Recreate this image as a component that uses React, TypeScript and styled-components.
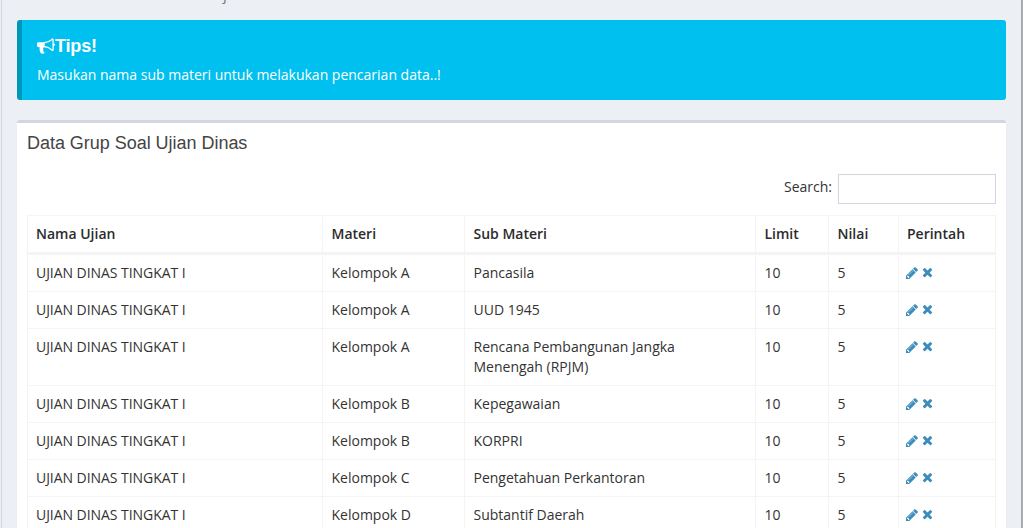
import React from "react";
import styled, { createGlobalStyle } from "styled-components";

const GlobalStyle = createGlobalStyle`
  *, *::before, *::after { box-sizing: border-box; }
  body {
    margin: 0;
    overflow: hidden;
    font: 14px/20px "Open Sans", "Liberation Sans", sans-serif;
    color: #333;
    background: #ecf0f5;
  }
`;

const Page = styled.main`
  height: 528px;
  overflow: hidden;
  margin-left: 1px;
  padding: 0 15px;
  background: #ecf0f5;
  border-left: 1px solid #d2d6de;
  border-right: 2px solid #a9abae;
`;

const PageHeading = styled.header`
  display: flex;
  align-items: flex-end;
  height: 20px;
  padding: 0 0 16px 206px;
  font: 15px/20px "Open Sans", sans-serif;
  color: #777;
`;

const Callout = styled.section`
  height: 80px;
  margin: 0 0 20px;
  padding: 16px 30px 14px 15px;
  border-left: 5px solid #0097bc;
  border-radius: 3px;
  background: #00c0ef;
  color: #fff;
`;

const CalloutTitle = styled.h4`
  display: flex;
  align-items: center;
  height: 20px;
  margin: 0 0 9px;
  font: bold 18px/20px "Liberation Sans", Arial, sans-serif;
  letter-spacing: -0.15px;
`;

const CalloutText = styled.p`
  margin: 0;
`;

const Box = styled.section`
  height: 520px;
  border-top: 3px solid #d2d6de;
  border-radius: 3px;
  background: #fff;
  box-shadow: 0 1px 1px rgba(0, 0, 0, 0.1);
`;

const BoxTitle = styled.h3`
  margin: 0;
  padding: 10px 10px 11px;
  font: 18px/20px "Liberation Sans", Arial, sans-serif;
  letter-spacing: -0.03px;
  color: #444;
`;

const BoxBody = styled.div`
  padding: 10px;
`;

const Filter = styled.label`
  display: flex;
  justify-content: flex-end;
  gap: 6px;
  line-height: 26px;
  margin-bottom: 11px;
`;

const SearchInput = styled.input`
  width: 158px;
  height: 30px;
  padding: 5px 10px;
  border: 1px solid #d2d6de;
  border-radius: 0;
  background: #fff;
`;

const Table = styled.table`
  width: 969px;
  table-layout: fixed;
  border-collapse: separate;
  border-spacing: 0;
  border-right: 1px solid #f4f4f4;
`;

const HeadCell = styled.th`
  height: 40px;
  padding: 8px 8px 8px 8.5px;
  border: solid #f4f4f4;
  border-width: 1px 0 3px 1px;
  text-align: left;
  font-weight: 600;
  color: #2b2b2b;

  &:first-child,
  &:last-child {
    padding-left: 8px;
  }
`;

const Cell = styled.td<{ $wide?: boolean }>`
  padding: 8px ${(p) => (p.$wide ? 30 : 8)}px 8px 8.5px;
  border: solid #f4f4f4;
  border-width: 0 0 1px 1px;
  vertical-align: top;

  &:first-child {
    padding-left: 8px;
    letter-spacing: -0.05px;
  }

  &:last-child {
    padding-left: 7px;
  }
`;

const Actions = styled.div`
  display: flex;
  align-items: center;
  gap: 4px;
  height: 20px;
  color: #3c8dbc;
`;

const Glyph = styled.svg`
  display: block;
  flex: none;
  fill: currentColor;
`;

const Bullhorn = () => (
  <Glyph width="18" height="18" viewBox="0 0 1792 1792" aria-hidden="true">
    <path d="M1664 640q53 0 90.500 37.500t37.500 90.500-37.500 90.500-90.500 37.500v384q0 52-38 90t-90 38q-417-347-812-380-58 19-91 66t-31 100.500 40 92.500q-20 33-23 65.500t6 58 33.500 55 48 50 61.500 50.500q-29 58-111.500 83t-168.500 11.500-132-55.500q-7-23-29.500-87.500t-32-94.500-23-89-15-101 3.500-98.500 22-110.500h-122q-66 0-113-47t-47-113v-192q0-66 47-113t113-47h480q435 0 896-384 52 0 90 38t38 90v384zM1536 1244v-954q-394 302-768 343v270q377 42 768 341z" />
  </Glyph>
);

const Pencil = () => (
  <Glyph width="12" height="14" viewBox="0 -128 1536 1792" aria-hidden="true">
    <path d="M363 1408l91-91-235-235-91 91v107h128v128h107zM886 480q0-22-22-22-10 0-17 7l-542 542q-7 7-7 17 0 22 22 22 10 0 17-7l542-542q7-7 7-17zM832 288l416 416-832 832h-416v-416zM1515 384q0 53-37 90l-166 166-416-416 166-165q36-38 90-38 53 0 91 38l235 234q37 39 37 91z" />
  </Glyph>
);

const Times = () => (
  <Glyph width="11" height="14" viewBox="0 0 1408 1792" aria-hidden="true">
    <path d="M1298 1214q0 40-28 68l-136 136q-28 28-68 28t-68-28l-294-294-294 294q-28 28-68 28t-68-28l-136-136q-28-28-28-68t28-68l294-294-294-294q-28-28-28-68t28-68l136-136q28-28 68-28t68 28l294 294 294-294q28-28 68-28t68 28l136 136q28 28 28 68t-28 68l-294 294 294 294q28 28 28 68z" />
  </Glyph>
);

const columns = [
  { label: "Nama Ujian", width: 295 },
  { label: "Materi", width: 142 },
  { label: "Sub Materi", width: 291 },
  { label: "Limit", width: 73 },
  { label: "Nilai", width: 70 },
  { label: "Perintah", width: 97 },
];

const rows = [
  ["Kelompok A", "Pancasila"],
  ["Kelompok A", "UUD 1945"],
  ["Kelompok A", "Rencana Pembangunan Jangka Menengah (RPJM)"],
  ["Kelompok B", "Kepegawaian"],
  ["Kelompok B", "KORPRI"],
  ["Kelompok C", "Pengetahuan Perkantoran"],
  ["Kelompok D", "Subtantif Daerah"],
];

export default function App() {
  return (
    <>
      <GlobalStyle />
      <Page>
        <PageHeading>j</PageHeading>
        <Callout>
          <CalloutTitle>
            <Bullhorn />
            Tips!
          </CalloutTitle>
          <CalloutText>Masukan nama sub materi untuk melakukan pencarian data..!</CalloutText>
        </Callout>
        <Box>
          <BoxTitle>Data Grup Soal Ujian Dinas</BoxTitle>
          <BoxBody>
            <Filter>
              Search:
              <SearchInput type="search" />
            </Filter>
            <Table>
              <colgroup>
                {columns.map((c) => (
                  <col key={c.label} width={c.width} />
                ))}
              </colgroup>
              <thead>
                <tr>
                  {columns.map((c) => (
                    <HeadCell key={c.label}>{c.label}</HeadCell>
                  ))}
                </tr>
              </thead>
              <tbody>
                {rows.map(([group, topic]) => (
                  <tr key={topic}>
                    <Cell>UJIAN DINAS TINGKAT I</Cell>
                    <Cell>{group}</Cell>
                    <Cell $wide>{topic}</Cell>
                    <Cell>10</Cell>
                    <Cell>5</Cell>
                    <Cell>
                      <Actions>
                        <Pencil />
                        <Times />
                      </Actions>
                    </Cell>
                  </tr>
                ))}
              </tbody>
            </Table>
          </BoxBody>
        </Box>
      </Page>
    </>
  );
}
